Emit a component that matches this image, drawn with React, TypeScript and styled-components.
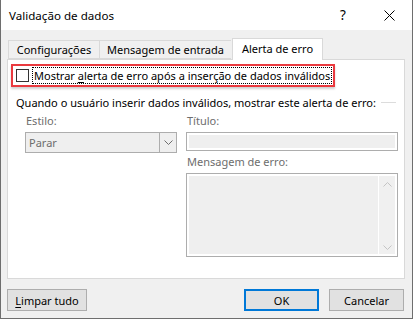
import React from "react";
import styled, { createGlobalStyle } from "styled-components";

const GlobalStyle = createGlobalStyle`
  * { box-sizing: border-box; }
  html, body { margin: 0; padding: 0; background: #ffffff; }
  body {
    font-family: "Noto Sans", "Open Sans", sans-serif;
    font-size: 11px;
    color: #000000;
  }
`;

const Window = styled.div`
  width: 413px;
  height: 319px;
  display: flex;
  flex-direction: column;
  background: #f0f0f0;
  border: 1px solid #6e6e6e;
  border-top: none;
`;

const TitleBar = styled.div`
  height: 30px;
  display: flex;
  align-items: center;
  background: #ffffff;
  padding-left: 8px;
`;

const TitleText = styled.div`
  flex: 1;
  font-size: 11.6px;
`;

const CaptionButton = styled.div`
  width: 46px;
  height: 30px;
  display: flex;
  align-items: center;
  justify-content: center;
  font-size: 13.5px;
`;

const Body = styled.div`
  flex: 1;
  display: flex;
  flex-direction: column;
  padding: 8px 7px 0 6px;
`;

const TabStrip = styled.div`
  display: flex;
  align-items: flex-end;
  height: 21px;
  padding-left: 1px;
`;

const Tab = styled.div<{ $w: number; $active?: boolean }>`
  position: relative;
  width: ${(p) => p.$w}px;
  height: ${(p) => (p.$active ? 22 : 19)}px;
  margin-bottom: ${(p) => (p.$active ? -1 : 0)}px;
  margin-left: ${(p) => (p.$active ? 1 : 0)}px;
  z-index: ${(p) => (p.$active ? 2 : 1)};
  display: flex;
  align-items: center;
  justify-content: center;
  padding-bottom: ${(p) => (p.$active ? 2 : 0)}px;
  background: ${(p) => (p.$active ? "#ffffff" : "#f0f0f0")};
  border: 1px solid #d9d9d9;
  border-bottom: ${(p) => (p.$active ? "none" : "1px solid #d9d9d9")};
  border-right: ${(p) => (p.$active ? "1px solid #d9d9d9" : "none")};
  white-space: nowrap;
`;

const Panel = styled.div`
  height: 220px;
  background: #ffffff;
  border: 1px solid #d9d9d9;
  padding: 4px 8px 0 3px;
  display: flex;
  flex-direction: column;
`;

const Highlight = styled.div`
  width: 324px;
  height: 23px;
  border: 2px solid #ea3a3f;
  display: flex;
  align-items: center;
  padding-left: 3px;
  gap: 3px;
  box-shadow: 0 2px 2px rgba(0, 0, 0, 0.18);
`;

const CheckBox = styled.div`
  flex-shrink: 0;
  width: 13px;
  height: 13px;
  border: 1px solid #333333;
  background: #ffffff;
`;

const FocusLabel = styled.div`
  border: 1px dotted #000000;
  padding: 0 1px;
  line-height: 15px;
  white-space: nowrap;
`;

const GroupHeader = styled.div`
  display: flex;
  align-items: center;
  margin-top: 8px;
  padding-left: 5px;
  line-height: 16px;
  white-space: nowrap;
`;

const GroupLine = styled.div`
  flex: 1;
  height: 1px;
  margin-left: 5px;
  margin-top: -2px;
  background: #dcdcdc;
`;

const Fields = styled.div`
  display: grid;
  grid-template-columns: 152px 212px;
  column-gap: 9px;
  padding-left: 14px;
  margin-top: 2px;
`;

const Column = styled.div`
  display: flex;
  flex-direction: column;
`;

const FieldLabel = styled.div<{ $gap?: number }>`
  color: #6d6d6d;
  line-height: 16px;
  margin-top: ${(p) => p.$gap || 0}px;
  padding-left: 1px;
`;

const Select = styled.div`
  margin-top: 3px;
  height: 21px;
  display: flex;
  border: 1px solid #adadad;
  background: #efefef;
`;

const SelectValue = styled.div`
  flex: 1;
  padding-left: 3px;
  line-height: 19px;
  color: #6d6d6d;
`;

const SelectArrow = styled.div`
  width: 17px;
  border-left: 1px solid #adadad;
  display: flex;
  align-items: center;
  justify-content: center;
`;

const TextBox = styled.div<{ $h: number }>`
  margin-top: 3px;
  height: ${(p) => p.$h}px;
  border: 1px solid #adadad;
  background: #efefef;
  box-shadow: inset 0 0 0 2px #ffffff;
  display: flex;
  justify-content: flex-end;
  padding: 2px;
`;

const ScrollBar = styled.div`
  width: 17px;
  border-left: 1px solid #ffffff;
  background: #f0f0f0;
  display: flex;
  flex-direction: column;
  justify-content: space-between;
  align-items: center;
  padding: 6px 0 4px;
`;

const Footer = styled.div`
  display: flex;
  align-items: center;
  padding-top: 10px;
  padding-right: 1px;
`;

const Button = styled.div<{ $w: number; $default?: boolean }>`
  width: ${(p) => p.$w}px;
  height: 22px;
  display: flex;
  align-items: center;
  justify-content: center;
  background: #e1e1e1;
  border: ${(p) => (p.$default ? "2px solid #0078d7" : "1px solid #adadad")};
  margin-left: ${(p) => (p.$default ? "auto" : "10px")};
  &:first-child {
    margin-left: 0;
  }
`;

const U = styled.span`
  text-decoration: underline;
  text-underline-offset: 2px;
`;

const Chevron = ({ up, color }: { up?: boolean; color: string }) => (
  <svg width="9" height="5" viewBox="0 0 9 5">
    <path
      d={up ? "M0.5 4.5 L4.5 0.5 L8.5 4.5" : "M0.5 0.5 L4.5 4.5 L8.5 0.5"}
      fill="none"
      stroke={color}
      strokeWidth="1"
    />
  </svg>
);

export default function App() {
  return (
    <>
      <GlobalStyle />
      <Window>
        <TitleBar>
          <TitleText>Validação de dados</TitleText>
          <CaptionButton>?</CaptionButton>
          <CaptionButton>
            <svg width="11" height="11" viewBox="0 0 11 11">
              <path d="M0.5 0.5 L10.5 10.5 M10.5 0.5 L0.5 10.5" stroke="#000" strokeWidth="1" />
            </svg>
          </CaptionButton>
        </TitleBar>
        <Body>
          <TabStrip>
            <Tab $w={91}>Configurações</Tab>
            <Tab $w={132}>Mensagem de entrada</Tab>
            <Tab $w={91} $active>
              Alerta de erro
            </Tab>
          </TabStrip>
          <Panel>
            <Highlight>
              <CheckBox />
              <FocusLabel>
                Mostrar <U>a</U>lerta de erro após a inserção de dados inválidos
              </FocusLabel>
            </Highlight>
            <GroupHeader>
              Quando o usuário inserir dados inválidos, mostrar este alerta de erro:
              <GroupLine />
            </GroupHeader>
            <Fields>
              <Column>
                <FieldLabel>Estilo:</FieldLabel>
                <Select>
                  <SelectValue>Parar</SelectValue>
                  <SelectArrow>
                    <Chevron color="#6d6d6d" />
                  </SelectArrow>
                </Select>
              </Column>
              <Column>
                <FieldLabel>Título:</FieldLabel>
                <TextBox $h={19} />
                <FieldLabel $gap={3}>Mensagem de erro:</FieldLabel>
                <TextBox $h={84}>
                  <ScrollBar>
                    <Chevron up color="#c4c4c4" />
                    <Chevron color="#c4c4c4" />
                  </ScrollBar>
                </TextBox>
              </Column>
            </Fields>
          </Panel>
          <Footer>
            <Button $w={80}>
              <span>
                <U>L</U>impar tudo
              </span>
            </Button>
            <Button $w={75} $default>
              OK
            </Button>
            <Button $w={75}>Cancelar</Button>
          </Footer>
        </Body>
      </Window>
    </>
  );
}
